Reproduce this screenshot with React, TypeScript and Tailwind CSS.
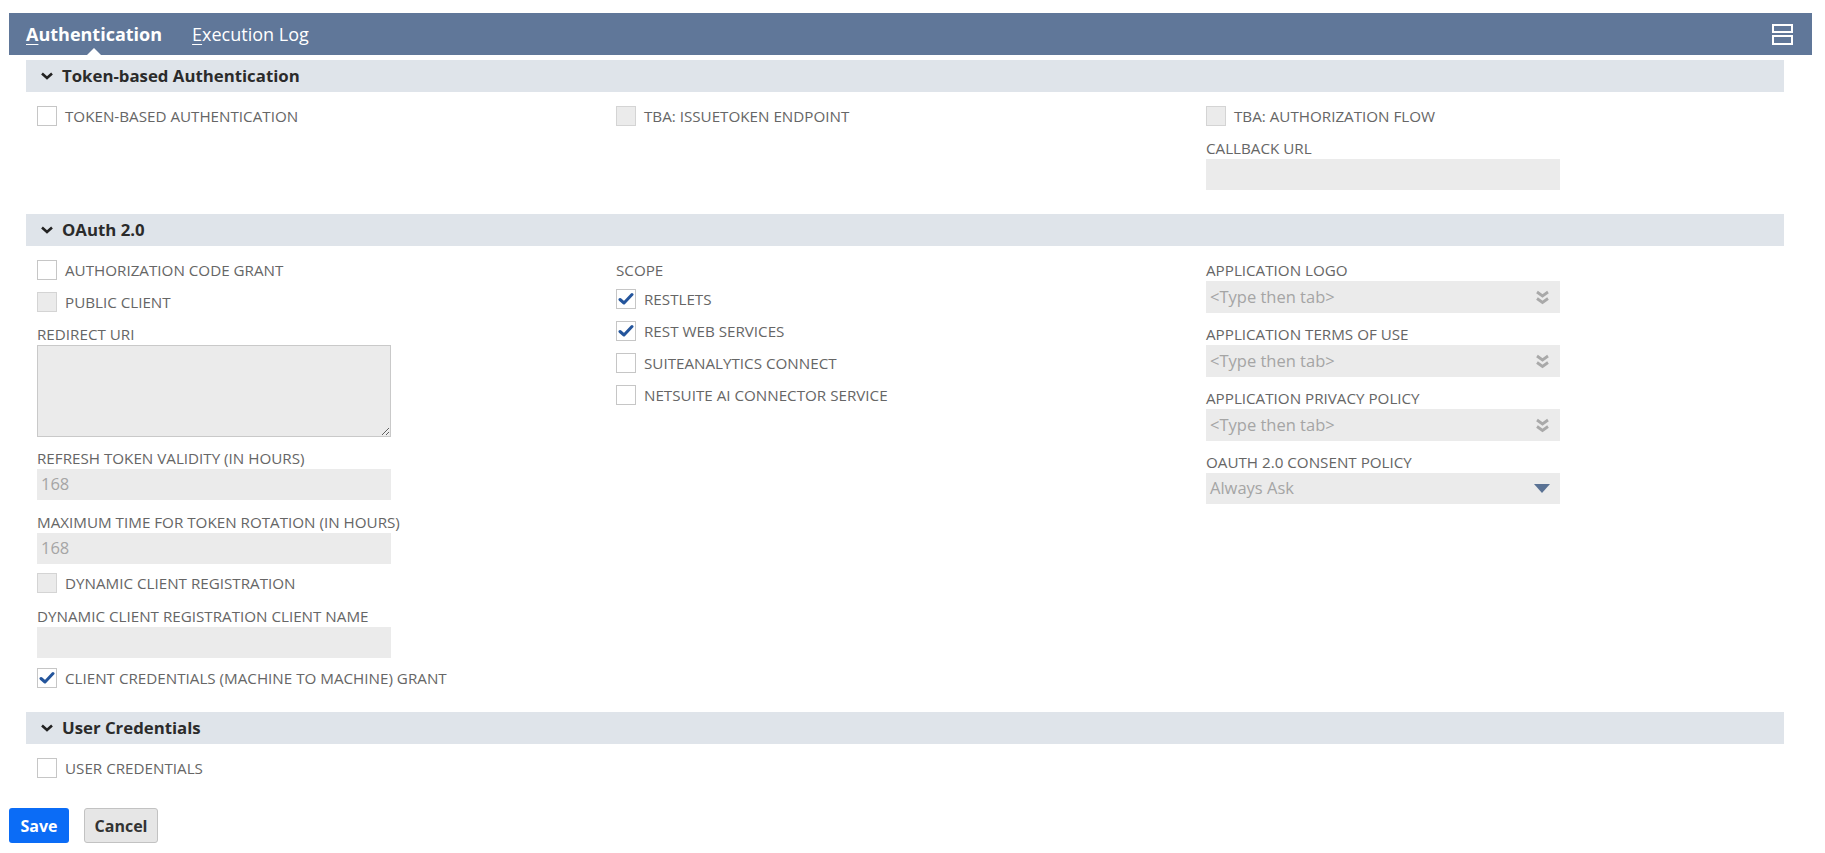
import React from "react";

// Checkbox square, optionally ticked or greyed out
function Box({ checked = false, disabled = false }: { checked?: boolean; disabled?: boolean }) {
    return (
        <span
            className={`flex items-center justify-center w-[20px] h-[20px] border shrink-0 ${
                disabled ? "bg-[#ebebeb] border-[#d4d4d4]" : "bg-white border-[#c6c6c6]"
            }`}
        >
            {checked && (
                <svg width="16" height="14" viewBox="0 0 16 14">
                    <path d="M2 7.5 L6 11 L14 2.5" fill="none" stroke="#24559c" strokeWidth="3" strokeLinecap="round" strokeLinejoin="round" />
                </svg>
            )}
        </span>
    );
}

function CheckRow({ label, checked, disabled, className = "" }: { label: string; checked?: boolean; disabled?: boolean; className?: string }) {
    return (
        <div className={`flex items-center gap-[8px] h-[32px] ${className}`}>
            <Box checked={checked} disabled={disabled} />
            <span className="text-[15.2px] text-[#666]">{label}</span>
        </div>
    );
}

function Label({ text, className = "" }: { text: string; className?: string }) {
    return <div className={`h-[20px] leading-[20px] text-[15.2px] text-[#666] ${className}`}>{text}</div>;
}

function DoubleChevron() {
    return (
        <svg width="15" height="15" viewBox="0 0 15 15">
            <polyline points="2,2 7.5,6 13,2" fill="none" stroke="#a9a9a9" strokeWidth="2.8" />
            <polyline points="2,8.5 7.5,12.5 13,8.5" fill="none" stroke="#a9a9a9" strokeWidth="2.8" />
        </svg>
    );
}

function Field({ value, placeholder, icon, h = "h-[31px]" }: { value?: string; placeholder?: string; icon?: React.ReactNode; h?: string }) {
    return (
        <div className={`flex items-center justify-between w-[354px] ${h} mt-[1px] bg-[#ebebeb] pl-[4px] pr-[10px] text-[16.5px] text-[#a5a5a5]`}>
            <span>{value ?? placeholder ?? ""}</span>
            {icon}
        </div>
    );
}

function SectionHeader({ title, className = "" }: { title: string; className?: string }) {
    return (
        <div className={`flex items-center h-[32px] bg-[#dfe4ea] pl-[14px] ${className}`}>
            <svg width="14" height="10" viewBox="0 0 14 10" className="mr-[8px]">
                <polyline points="2,2.5 7,7 12,2.5" fill="none" stroke="#222" strokeWidth="2.6" />
            </svg>
            <span className="text-[16.8px] font-bold text-[#2b2b2b]">{title}</span>
        </div>
    );
}

export default function App() {
    return (
        <div className="font-['Open_Sans',sans-serif] bg-white min-h-screen pt-[13px] pl-[9px] pr-[13px]">
            {/* Tab bar */}
            <div className="relative flex items-center h-[42px] bg-[#607799] pl-[17px]">
                <div className="relative h-full flex items-center">
                    <span className="text-[18px] font-bold text-white">
                        <span className="underline underline-offset-[3px]">A</span>uthentication
                    </span>
                    <span className="absolute bottom-0 left-1/2 -translate-x-1/2 w-0 h-0 border-l-[7px] border-r-[7px] border-b-[7px] border-l-transparent border-r-transparent border-b-white" />
                </div>
                <span className="ml-[30px] text-[18px] text-white">
                    <span className="underline underline-offset-[3px]">E</span>xecution Log
                </span>
                <div className="ml-auto mr-[19px] flex flex-col gap-[2px]">
                    <span className="block w-[21px] h-[9px] border-2 border-white" />
                    <span className="block w-[21px] h-[10px] border-2 border-white" />
                </div>
            </div>

            <div className="pl-[17px] pr-[28px]">
                {/* Token-based Authentication */}
                <SectionHeader title="Token-based Authentication" className="mt-[5px]" />
                <div className="grid grid-cols-[579px_590px_1fr] pl-[11px] pt-[8px]">
                    <div>
                        <CheckRow label="TOKEN-BASED AUTHENTICATION" />
                    </div>
                    <div>
                        <CheckRow label="TBA: ISSUETOKEN ENDPOINT" disabled />
                    </div>
                    <div>
                        <CheckRow label="TBA: AUTHORIZATION FLOW" disabled />
                        <Label text="CALLBACK URL" className="mt-[6px]" />
                        <Field />
                    </div>
                </div>

                {/* OAuth 2.0 */}
                <SectionHeader title="OAuth 2.0" className="mt-[24px]" />
                <div className="grid grid-cols-[579px_590px_1fr] pl-[11px] pt-[8px]">
                    <div>
                        <CheckRow label="AUTHORIZATION CODE GRANT" />
                        <CheckRow label="PUBLIC CLIENT" disabled />
                        <Label text="REDIRECT URI" className="mt-[6px]" />
                        <textarea
                            readOnly
                            className="block w-[354px] h-[92px] mt-[1px] bg-[#ebebeb] border border-[#c9c9c9] outline-none"
                        />
                        <Label text="REFRESH TOKEN VALIDITY (IN HOURS)" className="mt-[11px]" />
                        <Field value="168" />
                        <Label text="MAXIMUM TIME FOR TOKEN ROTATION (IN HOURS)" className="mt-[12px]" />
                        <Field value="168" />
                        <CheckRow label="DYNAMIC CLIENT REGISTRATION" disabled className="mt-[3px]" />
                        <Label text="DYNAMIC CLIENT REGISTRATION CLIENT NAME" className="mt-[7px]" />
                        <Field />
                        <CheckRow label="CLIENT CREDENTIALS (MACHINE TO MACHINE) GRANT" checked className="mt-[4px]" />
                    </div>
                    <div>
                        <Label text="SCOPE" className="mt-[6px]" />
                        <CheckRow label="RESTLETS" checked className="mt-[3px]" />
                        <CheckRow label="REST WEB SERVICES" checked />
                        <CheckRow label="SUITEANALYTICS CONNECT" />
                        <CheckRow label="NETSUITE AI CONNECTOR SERVICE" />
                    </div>
                    <div>
                        <Label text="APPLICATION LOGO" className="mt-[6px]" />
                        <Field placeholder="<Type then tab>" icon={<DoubleChevron />} h="h-[32px]" />
                        <Label text="APPLICATION TERMS OF USE" className="mt-[11px]" />
                        <Field placeholder="<Type then tab>" icon={<DoubleChevron />} h="h-[32px]" />
                        <Label text="APPLICATION PRIVACY POLICY" className="mt-[11px]" />
                        <Field placeholder="<Type then tab>" icon={<DoubleChevron />} h="h-[32px]" />
                        <Label text="OAUTH 2.0 CONSENT POLICY" className="mt-[11px]" />
                        <Field
                            placeholder="Always Ask"
                            h="h-[31px]"
                            icon={
                                <svg width="16" height="9" viewBox="0 0 16 9">
                                    <polygon points="0,0 16,0 8,9" fill="#5a7294" />
                                </svg>
                            }
                        />
                    </div>
                </div>

                {/* User Credentials */}
                <SectionHeader title="User Credentials" className="mt-[18px]" />
                <div className="pl-[11px] pt-[8px]">
                    <CheckRow label="USER CREDENTIALS" />
                </div>
            </div>

            {/* Actions */}
            <div className="flex items-center gap-[15px] mt-[24px] pb-[8px]">
                <button className="w-[60px] h-[35px] rounded-[3px] bg-[#0b6cf6] text-white text-[16px] font-bold">
                    Save
                </button>
                <button className="w-[74px] h-[35px] rounded-[3px] bg-[#e6e6e6] border border-[#c2c2c2] text-[#333] text-[16px] font-bold">
                    Cancel
                </button>
            </div>
        </div>
    );
}
